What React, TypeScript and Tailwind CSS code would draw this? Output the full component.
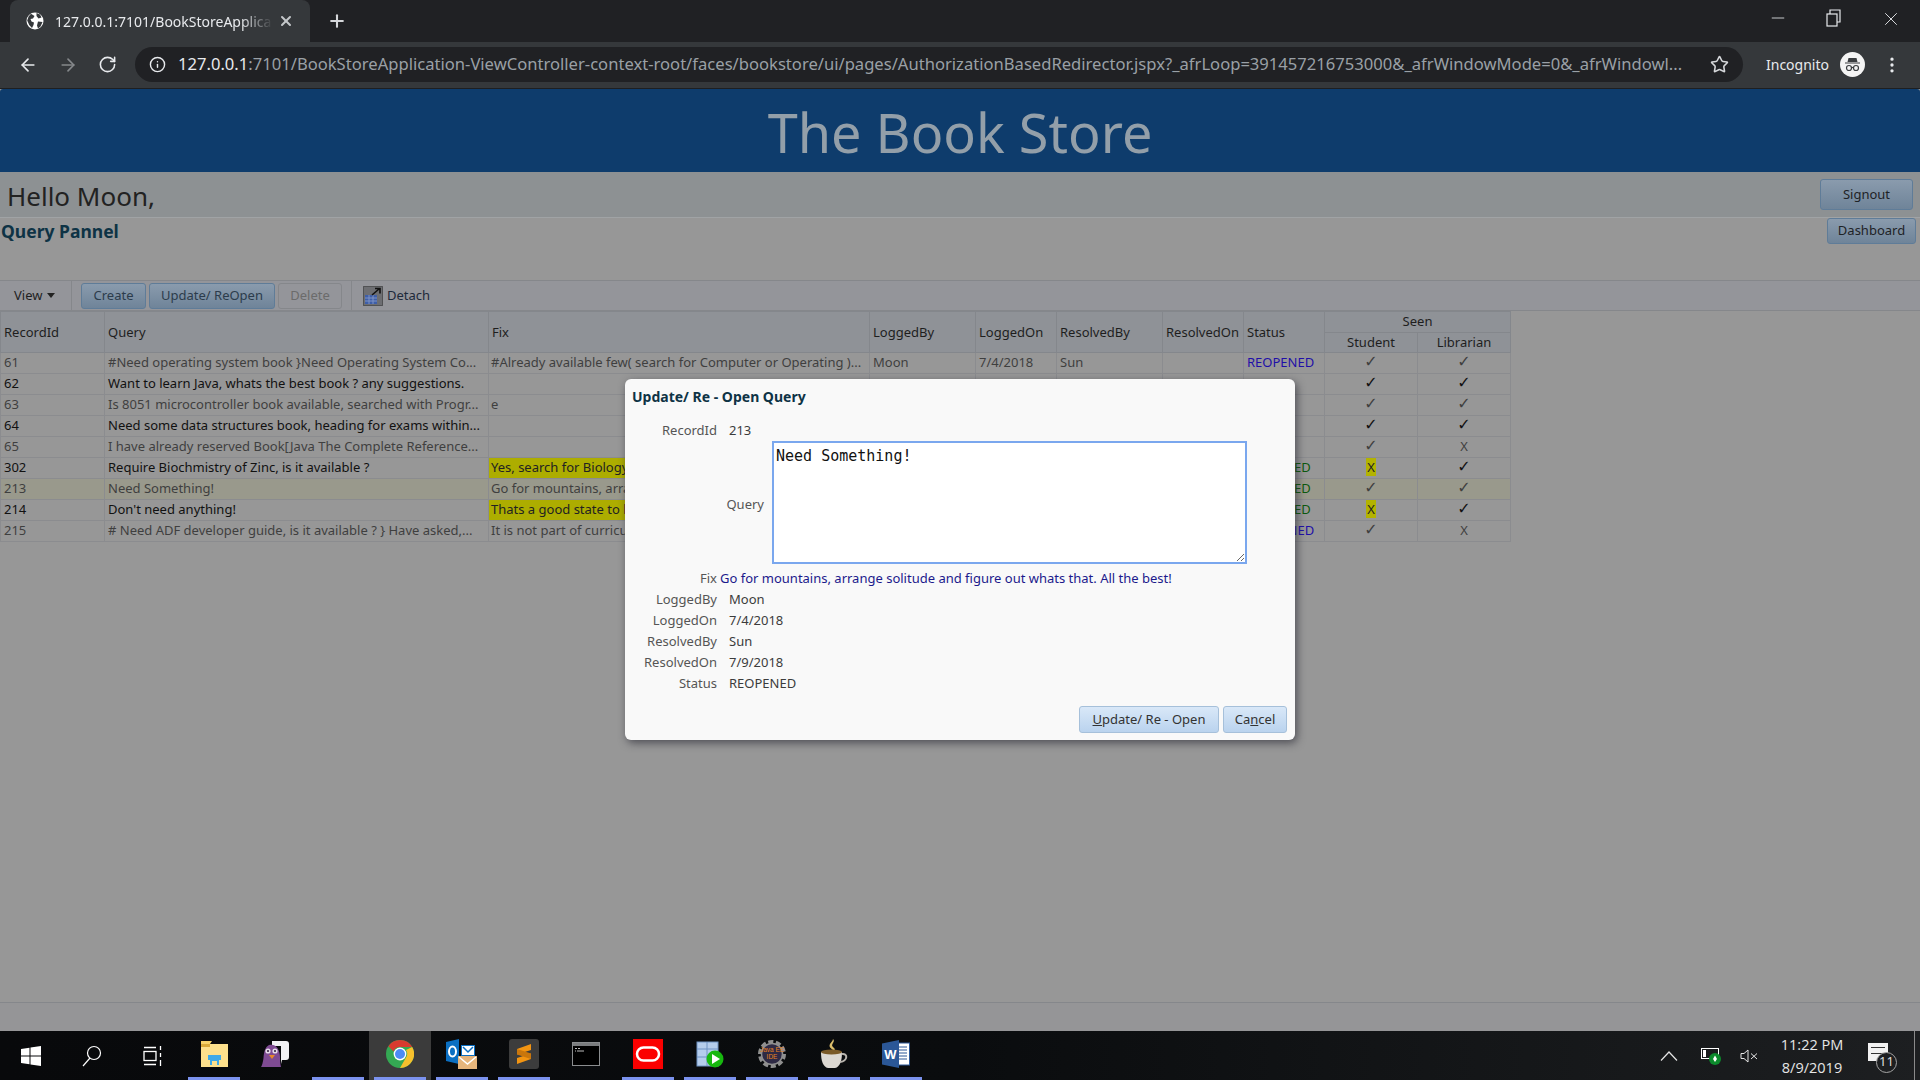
import { ReactNode } from "react";
import { ArrowLeft, ArrowRight, RotateCw, Info, Star, X, Plus, Minus, MoreVertical } from "lucide-react";

const uiFont = "[font-family:'Noto_Sans',sans-serif]";

const rows = [
    { id: "61", query: "#Need operating system book }Need Operating System Co...", fix: "#Already available few( search for Computer or Operating )...", by: "Moon", on: "7/4/2018", res: "Sun", status: "REOPENED", color: "text-[#1f0fa8]", student: "y", lib: "y" },
    { id: "62", query: "Want to learn Java, whats the best book ? any suggestions.", fix: "", by: "Moon", on: "7/11/2018", res: "", status: "OPEN", color: "text-[#b00000]", student: "y", lib: "y" },
    { id: "63", query: "Is 8051 microcontroller book available, searched with Progr...", fix: "e", by: "Moon", on: "7/4/2018", res: "", status: "", color: "", student: "y", lib: "y" },
    { id: "64", query: "Need some data structures book, heading for exams within...", fix: "", by: "Moon", on: "7/4/2018", res: "", status: "", color: "", student: "y", lib: "y" },
    { id: "65", query: "I have already reserved Book[Java The Complete Reference...", fix: "", by: "Moon", on: "7/4/2018", res: "", status: "", color: "", student: "y", lib: "n" },
    { id: "302", query: "Require Biochmistry of Zinc, is it available ?", fix: "Yes, search for Biology", yellow: true, by: "Moon", on: "7/4/2018", res: "Sun", status: "RESOLVED", color: "text-[#0d5a0d]", student: "x", lib: "y" },
    { id: "213", query: "Need Something!", fix: "Go for mountains, arrange solitude", by: "Moon", on: "7/4/2018", res: "Sun", status: "RESOLVED", color: "text-[#0d5a0d]", student: "y", lib: "y", selected: true },
    { id: "214", query: "Don't need anything!", fix: "Thats a good state to be in", yellow: true, by: "Moon", on: "7/4/2018", res: "Sun", status: "RESOLVED", color: "text-[#0d5a0d]", student: "x", lib: "y" },
    { id: "215", query: "# Need ADF developer guide, is it available ? } Have asked,...", fix: "It is not part of curriculum", by: "Moon", on: "7/4/2018", res: "Sun", status: "REOPENED", color: "text-[#1f0fa8]", student: "y", lib: "n" },
];

function Seen({ v }: { v: string }) {
    if (v === "y") return <span className="[font-family:'DejaVu_Sans',sans-serif] text-[16px] font-bold leading-none">✓</span>;
    if (v === "x") return <span className="bg-[#b3b300] px-px text-[#222]">X</span>;
    return <span>X</span>;
}

function PageButton({ children, className }: { children: ReactNode; className: string }) {
    return (
        <button className={"flex items-center justify-center rounded-[3px] border border-[#5f7c98] bg-gradient-to-b from-[#8a9bad] to-[#6f8499] text-[#1e2226] " + className}>
            {children}
        </button>
    );
}

function GlobeIcon() {
    return (
        <svg width="18" height="18" viewBox="0 0 18 18">
            <circle cx="9" cy="9" r="8.5" fill="#fff" />
            <path d="M5 1.8 8.5 4 7 6.5 4.5 7 5.5 9.5 8 10.5 7.5 13 6 16 3.2 13 1.2 8.5 2.6 4.5ZM10.5 1l3.5 1.5 1.5 3-3 1-2-2.5ZM12 9.5l4.5.5-2 4.5-2.5 2-1-3Z" fill="#35383b" />
        </svg>
    );
}

function IncognitoIcon() {
    return (
        <svg width="25" height="25" viewBox="0 0 25 25">
            <circle cx="12.5" cy="12.5" r="12.5" fill="#f4f4f4" />
            <path d="M8.5 6h8l1 4h-10ZM5 10.5h15v1H5Z" fill="#3a3d40" />
            <circle cx="9" cy="16" r="2.5" fill="none" stroke="#3a3d40" strokeWidth="1.2" />
            <circle cx="16" cy="16" r="2.5" fill="none" stroke="#3a3d40" strokeWidth="1.2" />
            <path d="M11.5 15.5h2" stroke="#3a3d40" strokeWidth="1.2" />
        </svg>
    );
}

function DetachIcon() {
    return (
        <svg width="20" height="20" viewBox="0 0 20 20">
            <rect x="0.5" y="0.5" width="19" height="19" fill="#6d6e72" stroke="#222" strokeDasharray="1 1" />
            <rect x="2" y="9" width="12" height="9" fill="#3f5fa8" />
            <path d="M2 12h12M2 15h12M6 9v9M10 9v9" stroke="#7f93c4" strokeWidth="1" />
            <path d="M9 9 16 3M12 2.5h5v5" fill="none" stroke="#111" strokeWidth="1.6" />
        </svg>
    );
}

function WinLogo() {
    return (
        <svg width="20" height="20" viewBox="0 0 20 20" fill="#fff">
            <path d="M0 3 8.5 1.8V9.4H0ZM9.5 1.6 20 0V9.4H9.5ZM0 10.5H8.5V18.2L0 17ZM9.5 10.5H20V20L9.5 18.4Z" />
        </svg>
    );
}

function SearchIcon() {
    return (
        <svg width="22" height="22" viewBox="0 0 22 22" fill="none" stroke="#fff" strokeWidth="1.2">
            <circle cx="13" cy="8" r="6.5" />
            <path d="M9 13 2 21" />
        </svg>
    );
}

function TaskViewIcon() {
    return (
        <svg width="20" height="20" viewBox="0 0 20 20" fill="none" stroke="#fff" strokeWidth="1.3">
            <rect x="1" y="5.5" width="12" height="9" />
            <path d="M1 1.5h12M1 18.5h12M17.5 0v4M17.5 7v4M17.5 14v6" />
        </svg>
    );
}

function FolderIcon() {
    return (
        <svg width="28" height="26" viewBox="0 0 28 26">
            <path d="M1 3h9l2-3H1Z" fill="#f7d26a" />
            <rect x="1" y="3" width="27" height="23" fill="#fde08c" />
            <rect x="1" y="3" width="9" height="3" fill="#d9a93a" />
            <path d="M8 14h13v5h-2v5H10v-5H8Z" fill="#3fa9e8" />
            <rect x="12" y="20" width="5" height="5" fill="#fde08c" />
        </svg>
    );
}

function PidginIcon() {
    return (
        <svg width="30" height="28" viewBox="0 0 30 28">
            <path d="M11 1h14a3 3 0 0 1 3 3v13a3 3 0 0 1-3 3h-4l-1 4V6h-9Z" fill="#f2f2f4" />
            <path d="M8 5C4 7 3 12 2.5 18 2 22 1 26 0 27h20c-1-4-1-8-1-10 0-7-4-14-11-12Z" fill="#7f4b93" />
            <circle cx="7" cy="11" r="2.6" fill="#e6dcea" />
            <circle cx="14" cy="11" r="2.6" fill="#e6dcea" />
            <circle cx="7" cy="11" r="1" fill="#2c1836" />
            <circle cx="14" cy="11" r="1" fill="#2c1836" />
            <path d="M8 15h6l-3 4Z" fill="#e8892a" />
        </svg>
    );
}

function ChromeIcon() {
    return (
        <svg width="28" height="28" viewBox="0 0 28 28">
            <circle cx="14" cy="14" r="14" fill="#34a853" />
            <path d="M14 0a14 14 0 0 1 12.2 7H14a7 7 0 0 0-6.5 4.4L2.4 6.2A14 14 0 0 1 14 0Z" fill="#d93a2f" />
            <path d="M26.2 7A14 14 0 0 1 14 28l6-10.400A7 7 0 0 0 20 10Z" fill="#f6c02d" />
            <circle cx="14" cy="14" r="6.4" fill="#fff" />
            <circle cx="14" cy="14" r="5" fill="#4c8bf5" />
        </svg>
    );
}

function OutlookIcon() {
    return (
        <svg width="32" height="30" viewBox="0 0 32 30">
            <path d="M0 3 13 0v25L0 22Z" fill="#0b6fc2" />
            <ellipse cx="6.500" cy="12.500" rx="3.500" ry="5" fill="none" stroke="#fff" strokeWidth="2" />
            <rect x="15" y="6" width="14" height="12" fill="#0b6fc2" />
            <path d="M16 7h12v9H16Z" fill="#fff" />
            <path d="M17 8l5 5 5-5" fill="none" stroke="#0b6fc2" strokeWidth="1.500" />
            <rect x="12" y="17" width="19" height="14" fill="#e6b57c" />
            <path d="M13 18l8.500 7 8.500-7" fill="none" stroke="#fff" strokeWidth="1.500" />
        </svg>
    );
}

function SublimeIcon() {
    return (
        <svg width="30" height="30" viewBox="0 0 30 30">
            <rect width="30" height="30" rx="3" fill="#3c3c3c" />
            <path d="M22 5v6L8 15.500V10ZM8 25v-6l14-4.500V20Z" fill="#f29412" />
            <path d="M8 15.500 22 20v-5.500L8 10Z" fill="#c9760c" />
        </svg>
    );
}

function TerminalIcon() {
    return (
        <svg width="28" height="24" viewBox="0 0 28 24">
            <rect x="0.500" y="0.500" width="27" height="23" fill="#000" stroke="#8a8c8e" />
            <rect x="1" y="1" width="26" height="3" fill="#7a7c7e" />
            <path d="M3 6.500h2M6 6.500h2M3 9h1M5 9h7" stroke="#bbb" strokeWidth="1" />
        </svg>
    );
}

function OracleIcon() {
    return (
        <svg width="30" height="30" viewBox="0 0 30 30">
            <rect width="30" height="30" fill="#fb0000" />
            <rect x="4" y="8.500" width="22" height="13" rx="6.500" fill="none" stroke="#fff" strokeWidth="2.500" />
        </svg>
    );
}

function TableRunIcon() {
    return (
        <svg width="28" height="28" viewBox="0 0 28 28">
            <rect x="1" y="2" width="21" height="24" fill="#b5cdec" stroke="#6f93c4" />
            <path d="M1 9h21M1 17h21M11 2v24" stroke="#6f93c4" />
            <circle cx="19" cy="19" r="8.500" fill="#17b80f" />
            <path d="M16 14l8 5-8 5Z" fill="#fff" />
        </svg>
    );
}

function GearIcon() {
    return (
        <svg width="28" height="28" viewBox="0 0 28 28">
            <circle cx="14" cy="14" r="12" fill="none" stroke="#8f8f8f" strokeWidth="4" strokeDasharray="5 2.500" />
            <circle cx="14" cy="14" r="10.500" fill="#2e2a45" stroke="#8f8f8f" strokeWidth="1.500" />
            <text x="14" y="12" textAnchor="middle" fontSize="6.500" fill="#e8821e" fontFamily="Liberation Sans, sans-serif">Java EE</text>
            <text x="14" y="19" textAnchor="middle" fontSize="6.500" fill="#e8821e" fontFamily="Liberation Sans, sans-serif">IDE</text>
        </svg>
    );
}

function CoffeeIcon() {
    return (
        <svg width="30" height="30" viewBox="0 0 30 30">
            <path d="M14 0c3 3-3 5 0 8 1 1 3 2 1 4-1-2-6-3-4-7 1-2 3-3 3-5Z" fill="#dcbf6c" />
            <path d="M2 13h21c0 9-2 15-7 16H9c-5-1-7-7-7-16Z" fill="#dcd8d2" />
            <ellipse cx="12.500" cy="13" rx="10.500" ry="2.500" fill="#7a5a28" />
            <path d="M23 15c6-1 6 7-2 8" fill="none" stroke="#b8b4ae" strokeWidth="2" />
        </svg>
    );
}

function WordIcon() {
    return (
        <svg width="28" height="28" viewBox="0 0 28 28">
            <rect x="12" y="3" width="15.500" height="22" fill="#fff" stroke="#2b5797" />
            <path d="M15 7h10M15 10h10M15 13h10M15 16h10M15 19h10" stroke="#2b5797" />
            <path d="M0 3.500 17 0v28L0 24.500Z" fill="#2b5797" />
            <text x="8.500" y="19" textAnchor="middle" fontSize="13" fontWeight="700" fill="#fff" fontFamily="Liberation Sans, sans-serif">W</text>
        </svg>
    );
}

const taskbarApps = [
    { icon: <FolderIcon />, on: true },
    { icon: <PidginIcon />, on: false },
    { icon: null, on: true },
    { icon: <ChromeIcon />, on: true, active: true },
    { icon: <OutlookIcon />, on: true },
    { icon: <SublimeIcon />, on: true },
    { icon: <TerminalIcon />, on: false },
    { icon: <OracleIcon />, on: true },
    { icon: <TableRunIcon />, on: true },
    { icon: <GearIcon />, on: true },
    { icon: <CoffeeIcon />, on: true },
    { icon: <WordIcon />, on: true },
];

function DialogRow({ label, value }: { label: string; value: string }) {
    return (
        <div className="flex h-[21px] items-center gap-3">
            <div className="w-[92px] pt-px text-right text-[#555]">{label}</div>
            <div className="text-[#3c3c3c]">{value}</div>
        </div>
    );
}

export default function App() {
    return (
        <div className={"relative flex h-[1080px] w-[1920px] flex-col overflow-hidden bg-[#979797] text-[13px] " + uiFont}>
            {/* browser chrome */}
            <div className="flex h-[42px] items-end bg-[#202124] pl-[10px]">
                <div className="flex h-[42px] w-[300px] items-center rounded-t-[8px] bg-[#35383b] pl-4 text-[#e8eaed]">
                    <GlobeIcon />
                    <span className="ml-[11px] w-[218px] overflow-hidden whitespace-nowrap text-[14px] [mask-image:linear-gradient(to_right,black_85%,transparent)]">127.0.0.1:7101/BookStoreApplica</span>
                    <X size={16} strokeWidth={3} className="ml-[5px] text-[#c4c7ca]" />
                </div>
                <Plus size={20} strokeWidth={2.5} className="mb-[11px] ml-[17px] text-[#d5d7da]" />
                <div className="ml-auto flex h-[42px] items-start pt-[8px] text-[#e8eaed]">
                    <Minus size={20} strokeWidth={1} className="mr-[38px]" />
                    <svg width="16" height="18" viewBox="0 0 16 18" fill="none" stroke="#e8eaed" strokeWidth="1.2" className="mr-[38px] mt-px">
                        <rect x="1" y="5" width="10" height="12" />
                        <path d="M4 5V1h10v12h-3" />
                    </svg>
                    <X size={22} strokeWidth={1} className="mr-[18px]" />
                </div>
            </div>
            <div className="flex h-[47px] items-center border-b border-[#1e1f21] bg-[#35383b] pb-px">
                <ArrowLeft size={20} className="ml-[18px] text-[#e8eaed]" />
                <ArrowRight size={20} className="ml-5 text-[#85888b]" />
                <RotateCw size={19} className="ml-5 text-[#e8eaed]" />
                <div className="ml-[18px] flex h-[35px] w-[1608px] items-center rounded-full bg-[#202124] pl-[14px]">
                    <Info size={17} className="text-[#e8eaed]" />
                    <div className="ml-[12px] w-[1510px] whitespace-nowrap text-[16.6px] text-[#9aa0a6]">
                        <span className="text-[#e8eaed]">127.0.0.1</span>:7101/BookStoreApplication-ViewController-context-root/faces/bookstore/ui/pages/AuthorizationBasedRedirector.jspx?_afrLoop=391457216753000&amp;_afrWindowMode=0&amp;_afrWindowl...
                    </div>
                    <Star size={19} className="ml-auto mr-[14px] text-[#d5d7da]" />
                </div>
                <span className="ml-[23px] text-[14px] text-[#e8eaed]">Incognito</span>
                <div className="ml-[11px]"><IncognitoIcon /></div>
                <MoreVertical size={20} className="ml-[17px] text-[#e8eaed]" />
            </div>

            {/* page header */}
            <div className="flex h-[83px] items-center justify-center rounded-t-[3px] bg-[#0e3c6c] pt-[4px] text-[54px] text-[#939fa9]">
                The Book Store
            </div>
            <div className="flex h-[46px] items-start justify-between border-b border-[#a0a3a5] bg-[#8d9193] pl-[7px] pr-[7px]">
                <div className="pt-[7px] text-[26px] leading-[35px] text-[#222]">Hello Moon,</div>
                <PageButton className="mt-[7px] h-[31px] w-[93px]">Signout</PageButton>
            </div>
            <div className="flex h-[62px] items-start justify-between pl-px pr-1">
                <div className="pt-px text-[17.5px] font-bold leading-[24px] text-[#0e3345]">Query Pannel</div>
                <PageButton className="h-[26px] w-[89px]">Dashboard</PageButton>
            </div>
            <div className="flex h-[31px] items-center border-y border-[#85878b] bg-[#94959a]">
                <div className="flex h-full w-[72px] items-center gap-[5px] border-r border-[#85878b] pl-[14px] text-[#1f1f1f]">
                    View
                    <span className="h-0 w-0 border-x-[4.5px] border-t-[5px] border-x-transparent border-t-[#222]" />
                </div>
                <PageButton className="ml-[9px] h-[26px] w-[65px] !text-[#2c3c4c]">Create</PageButton>
                <PageButton className="ml-[3px] h-[26px] w-[126px] !text-[#2c3c4c]">Update/ ReOpen</PageButton>
                <button className="ml-[3px] h-[26px] w-[64px] rounded-[3px] border border-[#85878b] text-[#6b6b6b]">Delete</button>
                <div className="ml-[9px] h-full border-l border-[#85878b]" />
                <div className="ml-[11px]"><DetachIcon /></div>
                <span className="ml-[4px] text-[#1e2a3a]">Detach</span>
            </div>

            {/* table */}
            <div className="min-h-0 flex-1">
                <table className="w-[1510px] table-fixed border-collapse">
                    <colgroup>
                        <col className="w-[104px]" />
                        <col className="w-[384px]" />
                        <col className="w-[381px]" />
                        <col className="w-[106px]" />
                        <col className="w-[81px]" />
                        <col className="w-[106px]" />
                        <col className="w-[81px]" />
                        <col className="w-[81px]" />
                        <col className="w-[93px]" />
                        <col className="w-[93px]" />
                    </colgroup>
                    <thead className="bg-[#8f9297] text-[#1e1e1e]">
                        <tr className="h-[20px]">
                            {["RecordId", "Query", "Fix", "LoggedBy", "LoggedOn", "ResolvedBy", "ResolvedOn", "Status"].map((h) => (
                                <th key={h} rowSpan={2} className="border border-[#84878c] pl-[3px] pt-px text-left font-normal">{h}</th>
                            ))}
                            <th colSpan={2} className="border border-[#84878c] font-normal">Seen</th>
                        </tr>
                        <tr className="h-[20px]">
                            <th className="border border-[#84878c] font-normal">Student</th>
                            <th className="border border-[#84878c] font-normal">Librarian</th>
                        </tr>
                    </thead>
                    <tbody>
                        {rows.map((r, i) => (
                            <tr key={r.id} className={"h-[21px] " + (r.selected ? "bg-[#99998c] " : "") + (i % 2 === 0 ? "text-[#3f3f3f]" : "text-[#111]")}>
                                <td className="border border-[#8b8c8f] pl-[3px]">{r.id}</td>
                                <td className="truncate border border-[#8b8c8f] pl-[3px]">{r.query}</td>
                                <td className={"truncate border border-[#8b8c8f] pl-[2px] " + (r.yellow ? "bg-[#adad00] text-[#222]" : "")}>{r.fix}</td>
                                <td className="border border-[#8b8c8f] pl-[3px]">{r.by}</td>
                                <td className="border border-[#8b8c8f] pl-[3px]">{r.on}</td>
                                <td className="border border-[#8b8c8f] pl-[3px]">{r.res}</td>
                                <td className="border border-[#8b8c8f]"></td>
                                <td className={"border border-[#8b8c8f] pl-[3px] " + r.color}>{r.status}</td>
                                <td className="border border-[#8b8c8f] text-center"><Seen v={r.student} /></td>
                                <td className="border border-[#8b8c8f] text-center"><Seen v={r.lib} /></td>
                            </tr>
                        ))}
                    </tbody>
                </table>
            </div>
            <div className="h-[29px] border-t border-[#85878b] bg-[#959597]" />

            {/* taskbar */}
            <div className="flex h-[49px] bg-gradient-to-r from-[#08090b] via-[#0a0c0e] to-[#1d1f21]">
                <div className="flex w-[61px] items-center justify-center"><WinLogo /></div>
                <div className="flex w-[61px] items-center justify-center"><SearchIcon /></div>
                <div className="flex w-[61px] items-center justify-center"><TaskViewIcon /></div>
                {taskbarApps.map((a, i) => (
                    <div key={i} className={"flex w-[62px] flex-col " + (a.active ? "bg-[#3b3b3b]" : "")}>
                        <div className="flex flex-1 items-center justify-center">{a.icon}</div>
                        <div className={"mx-[5px] h-[3px] " + (a.on ? "bg-[#7b92ee]" : "")} />
                    </div>
                ))}
                <div className="ml-auto flex items-center pr-[5px] text-[#e6e6e6]">
                    <svg width="18" height="10" viewBox="0 0 18 10" fill="none" stroke="#e6e6e6" strokeWidth="1.2"><path d="M1 9.500 9 1l8 8.500" /></svg>
                    <svg width="20" height="18" viewBox="0 0 20 18" className="ml-[23px]">
                        <rect x="0.500" y="1.500" width="17" height="10" fill="none" stroke="#fff" />
                        <rect x="2" y="3" width="3" height="7" fill="#fff" />
                        <circle cx="14" cy="12" r="6" fill="#0c8a2c" />
                        <path d="M14 8.500 16 12l-2 3-2-3Z" fill="#fff" />
                    </svg>
                    <svg width="19" height="14" viewBox="0 0 19 14" fill="none" stroke="#e6e6e6" strokeWidth="1" className="ml-[19px]">
                        <path d="M1 4.500h3L8 1v12L4 9.500H1Z" />
                        <path d="M11 4.500l6 5.500M17 4.500l-6 5.500" />
                    </svg>
                    <div className="ml-[15px] w-[76px] text-center text-[14.5px] leading-[23px] [font-family:'Open_Sans',sans-serif]">
                        <div>11:22 PM</div>
                        <div>8/9/2019</div>
                    </div>
                    <div className="relative mb-2 ml-[18px] h-[18px] w-[20px] bg-[#f2f2f2]">
                        <div className="mx-[3px] mt-[4px] h-[7px] border-y border-[#333]" />
                        <div className="absolute left-[8px] top-[9px] flex h-[21px] w-[21px] items-center justify-center rounded-full border border-[#a5a5a5] bg-[#1d1f21] text-[13px] text-[#ddd]">11</div>
                    </div>
                    <div className="ml-[26px] h-[49px] border-l border-[#8a8a8a]" />
                </div>
            </div>

            {/* update dialog */}
            <div className="absolute left-[625px] top-[379px] h-[361px] w-[670px] rounded-[6px] bg-[#f9f9f9] pt-[8px] shadow-[2px_3px_8px_rgba(40,40,50,0.65)]">
                <div className="h-[20px] pl-[7px] text-[14px] font-bold leading-[20px] text-[#0e3345]">Update/ Re - Open Query</div>
                <div className="mt-[13px]"><DialogRow label="RecordId" value="213" /></div>
                <div className="flex h-[123px] items-center gap-2">
                    <div className="w-[139px] pt-[5px] text-right text-[#555]">Query</div>
                    <textarea readOnly defaultValue="Need Something!" className="h-[123px] w-[475px] border-2 border-[#7aa7ee] bg-white px-[2px] pt-[4px] text-[15px] leading-[18px] text-[#111] outline-none [font-family:'DejaVu_Sans_Mono',monospace]" />
                </div>
                <div className="mt-[4px] flex h-[21px] items-center gap-[3px]">
                    <div className="w-[92px] text-right text-[#555]">Fix</div>
                    <div className="text-[#1c1a8c]">Go for mountains, arrange solitude and figure out whats that. All the best!</div>
                </div>
                <DialogRow label="LoggedBy" value="Moon" />
                <DialogRow label="LoggedOn" value="7/4/2018" />
                <DialogRow label="ResolvedBy" value="Sun" />
                <DialogRow label="ResolvedOn" value="7/9/2018" />
                <DialogRow label="Status" value="REOPENED" />
                <div className="mt-[12px] flex justify-end gap-1 pr-2">
                    <button className="h-[27px] w-[140px] rounded-[3px] border border-[#a6c0da] bg-gradient-to-b from-[#d9e8f8] to-[#bad3ee] pt-px text-[#333]"><span className="underline">U</span>pdate/ Re - Open</button>
                    <button className="h-[27px] w-[64px] rounded-[3px] border border-[#a6c0da] bg-gradient-to-b from-[#d9e8f8] to-[#bad3ee] pt-px text-[#333]">Ca<span className="underline">n</span>cel</button>
                </div>
            </div>
        </div>
    );
}
